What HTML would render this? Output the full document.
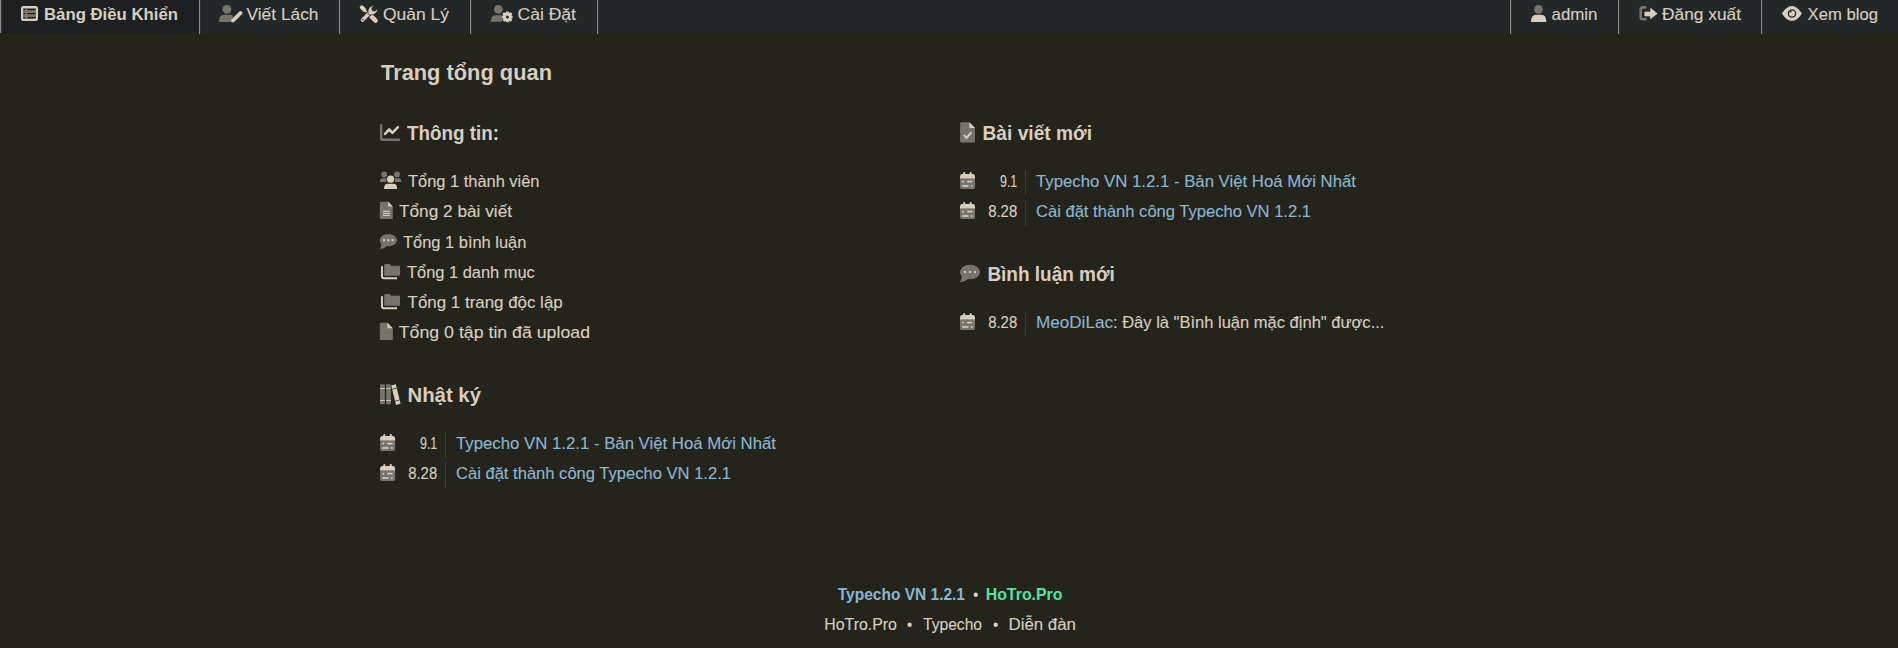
<!DOCTYPE html>
<html><head><meta charset="utf-8"><title>Trang tổng quan</title>
<style>
html,body{margin:0;padding:0;background:#24241d;width:1898px;height:648px;overflow:hidden}
svg{display:block;position:absolute;left:0;top:0}
text{font-family:"Liberation Sans",sans-serif}
</style></head><body>
<svg width="1898" height="648" viewBox="0 0 1898 648">
<rect x="0" y="0" width="1898" height="648" fill="#24241d"/>
<rect x="0" y="0" width="1898" height="33.4" fill="#232728"/>
<rect x="0" y="0" width="199" height="33.4" fill="#1e1f21"/>
<rect x="199" y="0" width="1.1" height="34" fill="#8c8c8a"/>
<rect x="339" y="0" width="1.1" height="34" fill="#8c8c8a"/>
<rect x="470" y="0" width="1.1" height="34" fill="#8c8c8a"/>
<rect x="597" y="0" width="1.1" height="34" fill="#8c8c8a"/>
<rect x="1510" y="0" width="1.1" height="34" fill="#8c8c8a"/>
<rect x="1618" y="0" width="1.1" height="34" fill="#8c8c8a"/>
<rect x="1761" y="0" width="1.1" height="34" fill="#8c8c8a"/>
<rect x="0" y="0" width="1.2" height="33" fill="#8c8c8a"/>
<rect x="445" y="432" width="1" height="25.600000000000023" fill="#3f3d35"/>
<rect x="445" y="462" width="1" height="25.69999999999999" fill="#3f3d35"/>
<rect x="1025" y="169.5" width="1" height="25.5" fill="#3f3d35"/>
<rect x="1025" y="200" width="1" height="25.69999999999999" fill="#3f3d35"/>
<rect x="1025" y="311.4" width="1" height="24.30000000000001" fill="#3f3d35"/>
<rect x="22" y="6.9" width="15" height="13.2" rx="1.5" fill="#77746d" stroke="#d8cec0" stroke-width="2"/>
<rect x="23.6" y="9" width="1.6" height="1.2" fill="#1e1f21"/><rect x="27.5" y="9" width="8" height="1.2" fill="#1e1f21"/>
<rect x="23.6" y="13" width="1.6" height="1.2" fill="#1e1f21"/><rect x="27.5" y="13" width="8" height="1.2" fill="#1e1f21"/>
<rect x="23.6" y="17" width="1.6" height="1.2" fill="#1e1f21"/><rect x="27.5" y="17" width="8" height="1.2" fill="#1e1f21"/>
<circle cx="226.9" cy="9.4" r="4.4" fill="#77746d"/>
<path d="M219,22 Q219,14.7 224,14.7 L229.5,14.7 Q232,14.7 233,16 L230.5,22 Z" fill="#77746d"/>
<path d="M233,20.5 L238.2,15.3" stroke="#d8cec0" stroke-width="3.8" stroke-linecap="round"/>
<path d="M231.3,22.2 L231.9,19.8 L233.7,21.6 Z" fill="#d8cec0"/>
<path d="M238.9,14.6 L239.9,13.6" stroke="#232728" stroke-width="5"/><path d="M239.7,13.8 L240.6,12.9" stroke="#d8cec0" stroke-width="3.8" stroke-linecap="round"/>
<path d="M362.7,8.3 L367.8,13.4" stroke="#d8cec0" stroke-width="1.6"/>
<path d="M361.8,7.3 L364.3,9.8" stroke="#d8cec0" stroke-width="4" stroke-linecap="round"/>
<path d="M370.6,15.6 L375.6,20.6" stroke="#d8cec0" stroke-width="4.4" stroke-linecap="round"/>
<path d="M362.6,20 L369,13.6" stroke="#232728" stroke-width="5.4" stroke-linecap="round"/>
<path d="M362.6,20 L369,13.6" stroke="#d8cec0" stroke-width="3.6" stroke-linecap="round"/>
<path d="M368.3,14.4 Q367,9.5 370.5,6.8 Q372.2,5.5 374.3,5.4 L371.8,8 L372.3,10.6 L374.9,11.2 L377.7,8.6 Q377.9,11.6 375.4,13.6 Q372.8,15.4 369.6,14.9 Z" fill="#d8cec0" stroke="#232728" stroke-width="0.7"/>
<circle cx="362.9" cy="19.7" r="0.75" fill="#232728"/>
<circle cx="498.4" cy="9.3" r="4.4" fill="#77746d"/>
<path d="M490.7,21.8 Q490.7,15.2 495.5,15.2 L501,15.2 Q503,15.2 503.5,16 L501.5,21.8 Z" fill="#77746d"/>
<g transform="translate(507.4,16.7)"><path d="M-1.3,-5.2 L1.3,-5.2 L1.7,-3.6 L3.4,-4.5 L5,-2.8 L4.1,-1.2 L5.2,-0.4 L5.2,1.6 L4,2 L4.8,3.6 L3.1,5.1 L1.6,4.1 L1.3,5.6 L-1.3,5.6 L-1.6,4.1 L-3.1,5.1 L-4.8,3.6 L-4,2 L-5.2,1.6 L-5.2,-0.4 L-4.1,-1.2 L-5,-2.8 L-3.4,-4.5 L-1.7,-3.6 Z" fill="#d8cec0"/>
<circle cx="0" cy="0.3" r="1.5" fill="#232728"/></g>
<circle cx="1538.5" cy="9.3" r="4.4" fill="#77746d"/>
<path d="M1531,22 Q1531,14.7 1536,14.7 L1541.3,14.7 Q1546.3,14.7 1546.3,22 Z" fill="#d8cec0"/>
<path d="M1645.5,7.4 L1643,7.4 Q1640.7,7.4 1640.7,9.7 L1640.7,17 Q1640.7,19.3 1643,19.3 L1645.5,19.3" fill="none" stroke="#77746d" stroke-width="2.6" stroke-linecap="round"/>
<path d="M1644.8,12 L1650.6,12 L1650.6,8.2 L1657.2,13.5 L1650.6,18.8 L1650.6,16 L1644.8,16 Z" fill="#d8cec0" stroke="#d8cec0" stroke-width="0.6" stroke-linejoin="round"/>
<path d="M1781.9,13.4 Q1786.5,5.9 1791.9,5.9 Q1797.3,5.9 1801.9,13.4 Q1797.3,20.8 1791.9,20.8 Q1786.5,20.8 1781.9,13.4 Z" fill="#d8cec0"/>
<circle cx="1792" cy="13.5" r="3.6" fill="#d8cec0" stroke="#232728" stroke-width="1.3"/>
<path d="M1789.2,12.6 A2.9,2.9 0 0 1 1791.2,10.6 L1791.6,12.4 Z" fill="#232728"/>
<path d="M381.2,124.2 L381.2,138.5 Q381.2,139.7 382.4,139.7 L399.9,139.7" fill="none" stroke="#77746d" stroke-width="2.4" stroke-linecap="butt"/>
<path d="M385,133.8 L389.2,129.4 L392.4,132.8 L397.9,127.2" fill="none" stroke="#d8cec0" stroke-width="2.5" stroke-linecap="round" stroke-linejoin="round"/>
<circle cx="384.2" cy="174.4" r="2.9" fill="#77746d"/><circle cx="397" cy="174.4" r="2.9" fill="#77746d"/>
<path d="M379.8,182 Q379.8,178.2 382.5,178.2 L386.4,178.2 L386.4,182 Z" fill="#77746d"/>
<path d="M395,182 L395,178.2 L398.8,178.2 Q401.3,178.2 401.3,182 Z" fill="#77746d"/>
<circle cx="390.6" cy="179.2" r="3.6" fill="#d8cec0"/>
<path d="M384,189 Q384,183.8 387.5,183.8 L393.6,183.8 Q397.1,183.8 397.1,189 Z" fill="#d8cec0"/>
<path d="M379.8,202.8 Q379.8,201.8 380.8,201.8 L388.2,201.8 L392.8,206.4 L392.8,217.9 Q392.8,218.9 391.8,218.9 L380.8,218.9 Q379.8,218.9 379.8,217.9 Z" fill="#77746d"/>
<path d="M388.2,201.8 L392.8,206.4 L388.2,206.4 Z" fill="#d8cec0"/>
<rect x="383" y="210.7" width="6.8" height="1.1" fill="#d8cec0"/><rect x="383" y="212.8" width="6.8" height="1.1" fill="#d8cec0"/><rect x="383" y="214.9" width="6.8" height="1.1" fill="#d8cec0"/>
<ellipse cx="388.35" cy="240.174" rx="8.55" ry="6.1739999999999995" fill="#77746d"/>
<path d="M381.51,242.82 Q381.85200000000003,246.495 379.8,248.7 Q384.93,248.7 386.982,245.76 Z" fill="#77746d"/>
<rect x="383.07500000000005" y="239.174" width="2" height="2" fill="#d8cec0"/><rect x="387.35" y="239.174" width="2" height="2" fill="#d8cec0"/><rect x="391.625" y="239.174" width="2" height="2" fill="#d8cec0"/>
<path d="M382.0,266.2 L382.0,276.6 Q382.0,278.3 383.7,278.3 L397.0,278.3" fill="none" stroke="#d8cec0" stroke-width="2"/>
<path d="M384.2,265 Q384.2,264 385.2,264 L389.7,264 L391.2,265.8 L399.0,265.8 Q400.0,265.8 400.0,266.8 L400.0,274.8 Q400.0,275.8 399.0,275.8 L385.2,275.8 Q384.2,275.8 384.2,274.8 Z" fill="#77746d"/>
<path d="M382.0,296.2 L382.0,306.6 Q382.0,308.3 383.7,308.3 L397.0,308.3" fill="none" stroke="#d8cec0" stroke-width="2"/>
<path d="M384.2,295 Q384.2,294 385.2,294 L389.7,294 L391.2,295.8 L399.0,295.8 Q400.0,295.8 400.0,296.8 L400.0,304.8 Q400.0,305.8 399.0,305.8 L385.2,305.8 Q384.2,305.8 384.2,304.8 Z" fill="#77746d"/>
<path d="M379.8,323.8 Q379.8,322.8 380.8,322.8 L387.40000000000003,322.8 L392.8,328.2 L392.8,338.90000000000003 Q392.8,339.90000000000003 391.8,339.90000000000003 L380.8,339.90000000000003 Q379.8,339.90000000000003 379.8,338.90000000000003 Z" fill="#77746d"/>
<path d="M387.40000000000003,322.8 L392.8,328.2 L387.40000000000003,328.2 Z" fill="#d8cec0"/>
<rect x="380.1" y="384.3" width="4.8" height="19.9" rx="0.6" fill="#77746d"/><rect x="386.2" y="384.3" width="4.7" height="19.9" rx="0.6" fill="#77746d"/>
<rect x="380.1" y="388" width="4.8" height="0.9" fill="#d8cec0"/><rect x="380.1" y="400" width="4.8" height="0.9" fill="#d8cec0"/>
<rect x="386.2" y="388" width="4.7" height="0.9" fill="#d8cec0"/><rect x="386.2" y="400" width="4.7" height="0.9" fill="#d8cec0"/>
<path d="M391.2,385.6 L395.8,384.3 L400.6,403.8 L396,405.1 Z" fill="#d8cec0"/>
<path d="M392.2,389.3 L396.8,388" stroke="#24241d" stroke-width="0.8"/><path d="M395.1,401.2 L399.7,399.9" stroke="#24241d" stroke-width="0.8"/>
<g transform="translate(380.1,434)">
<rect x="3.2" y="0" width="2" height="3" rx="1" fill="#d8cec0"/><rect x="9.7" y="0" width="2" height="3" rx="1" fill="#d8cec0"/>
<path d="M0,4.5 Q0,2 2,2 L13,2 Q15,2 15,4.5 L15,6.7 L0,6.7 Z" fill="#d8cec0"/>
<path d="M0,6.7 L15,6.7 L15,15.2 Q15,17 13.2,17 L1.8,17 Q0,17 0,15.2 Z" fill="#77746d"/>
<rect x="2.2" y="8.8" width="1.8" height="1.6" fill="#d8cec0"/><rect x="7.2" y="8.8" width="5.3" height="1.6" fill="#d8cec0"/>
<rect x="2.2" y="13.2" width="6.2" height="1.6" fill="#d8cec0"/><rect x="10.8" y="13.2" width="1.8" height="1.6" fill="#d8cec0"/>
</g>
<g transform="translate(380.1,464)">
<rect x="3.2" y="0" width="2" height="3" rx="1" fill="#d8cec0"/><rect x="9.7" y="0" width="2" height="3" rx="1" fill="#d8cec0"/>
<path d="M0,4.5 Q0,2 2,2 L13,2 Q15,2 15,4.5 L15,6.7 L0,6.7 Z" fill="#d8cec0"/>
<path d="M0,6.7 L15,6.7 L15,15.2 Q15,17 13.2,17 L1.8,17 Q0,17 0,15.2 Z" fill="#77746d"/>
<rect x="2.2" y="8.8" width="1.8" height="1.6" fill="#d8cec0"/><rect x="7.2" y="8.8" width="5.3" height="1.6" fill="#d8cec0"/>
<rect x="2.2" y="13.2" width="6.2" height="1.6" fill="#d8cec0"/><rect x="10.8" y="13.2" width="1.8" height="1.6" fill="#d8cec0"/>
</g>
<g transform="translate(960,172)">
<rect x="3.2" y="0" width="2" height="3" rx="1" fill="#d8cec0"/><rect x="9.7" y="0" width="2" height="3" rx="1" fill="#d8cec0"/>
<path d="M0,4.5 Q0,2 2,2 L13,2 Q15,2 15,4.5 L15,6.7 L0,6.7 Z" fill="#d8cec0"/>
<path d="M0,6.7 L15,6.7 L15,15.2 Q15,17 13.2,17 L1.8,17 Q0,17 0,15.2 Z" fill="#77746d"/>
<rect x="2.2" y="8.8" width="1.8" height="1.6" fill="#d8cec0"/><rect x="7.2" y="8.8" width="5.3" height="1.6" fill="#d8cec0"/>
<rect x="2.2" y="13.2" width="6.2" height="1.6" fill="#d8cec0"/><rect x="10.8" y="13.2" width="1.8" height="1.6" fill="#d8cec0"/>
</g>
<g transform="translate(960,202)">
<rect x="3.2" y="0" width="2" height="3" rx="1" fill="#d8cec0"/><rect x="9.7" y="0" width="2" height="3" rx="1" fill="#d8cec0"/>
<path d="M0,4.5 Q0,2 2,2 L13,2 Q15,2 15,4.5 L15,6.7 L0,6.7 Z" fill="#d8cec0"/>
<path d="M0,6.7 L15,6.7 L15,15.2 Q15,17 13.2,17 L1.8,17 Q0,17 0,15.2 Z" fill="#77746d"/>
<rect x="2.2" y="8.8" width="1.8" height="1.6" fill="#d8cec0"/><rect x="7.2" y="8.8" width="5.3" height="1.6" fill="#d8cec0"/>
<rect x="2.2" y="13.2" width="6.2" height="1.6" fill="#d8cec0"/><rect x="10.8" y="13.2" width="1.8" height="1.6" fill="#d8cec0"/>
</g>
<g transform="translate(960,313)">
<rect x="3.2" y="0" width="2" height="3" rx="1" fill="#d8cec0"/><rect x="9.7" y="0" width="2" height="3" rx="1" fill="#d8cec0"/>
<path d="M0,4.5 Q0,2 2,2 L13,2 Q15,2 15,4.5 L15,6.7 L0,6.7 Z" fill="#d8cec0"/>
<path d="M0,6.7 L15,6.7 L15,15.2 Q15,17 13.2,17 L1.8,17 Q0,17 0,15.2 Z" fill="#77746d"/>
<rect x="2.2" y="8.8" width="1.8" height="1.6" fill="#d8cec0"/><rect x="7.2" y="8.8" width="5.3" height="1.6" fill="#d8cec0"/>
<rect x="2.2" y="13.2" width="6.2" height="1.6" fill="#d8cec0"/><rect x="10.8" y="13.2" width="1.8" height="1.6" fill="#d8cec0"/>
</g>
<path d="M960.1,123.3 Q960.1,122.3 961.1,122.3 L969.4,122.3 L975.0,127.89999999999999 L975.0,141.6 Q975.0,142.6 974.0,142.6 L961.1,142.6 Q960.1,142.6 960.1,141.6 Z" fill="#77746d"/>
<path d="M969.4,122.3 L975.0,127.89999999999999 L969.4,127.89999999999999 Z" fill="#d8cec0"/>
<path d="M964.4,135.6 L966.5,137.9 L970.8,133" fill="none" stroke="#d8cec0" stroke-width="2" stroke-linecap="round" stroke-linejoin="round"/>
<ellipse cx="969.9" cy="272.024" rx="10.1" ry="7.223999999999999" fill="#77746d"/>
<path d="M961.8199999999999,275.12 Q962.2239999999999,279.42 959.8,282.0 Q965.8599999999999,282.0 968.284,278.56 Z" fill="#77746d"/>
<rect x="963.85" y="271.024" width="2" height="2" fill="#d8cec0"/><rect x="968.9" y="271.024" width="2" height="2" fill="#d8cec0"/><rect x="973.9499999999999" y="271.024" width="2" height="2" fill="#d8cec0"/>
<circle cx="975.8" cy="594.8" r="2.2" fill="#d8cec0"/><circle cx="909.6" cy="624.8" r="2.2" fill="#d8cec0"/><circle cx="995.7" cy="624.8" r="2.2" fill="#d8cec0"/>
<text x="44" y="20" font-size="17" fill="#d8cec0" font-weight="bold" textLength="134" lengthAdjust="spacingAndGlyphs">Bảng Điều Khiển</text>
<text x="246.5" y="20" font-size="16.5" fill="#d8cec0" stroke="#d8cec0" stroke-width="0.12" textLength="72" lengthAdjust="spacingAndGlyphs">Viết Lách</text>
<text x="383" y="20" font-size="16.5" fill="#d8cec0" stroke="#d8cec0" stroke-width="0.12" textLength="66" lengthAdjust="spacingAndGlyphs">Quản Lý</text>
<text x="517.5" y="20" font-size="16.5" fill="#d8cec0" stroke="#d8cec0" stroke-width="0.12" textLength="58.5" lengthAdjust="spacingAndGlyphs">Cài Đặt</text>
<text x="1551.5" y="20" font-size="16.5" fill="#d8cec0" stroke="#d8cec0" stroke-width="0.12" textLength="46" lengthAdjust="spacingAndGlyphs">admin</text>
<text x="1662" y="20" font-size="16.5" fill="#d8cec0" stroke="#d8cec0" stroke-width="0.12" textLength="79" lengthAdjust="spacingAndGlyphs">Đăng xuất</text>
<text x="1807.5" y="20" font-size="16.5" fill="#d8cec0" stroke="#d8cec0" stroke-width="0.12" textLength="70.5" lengthAdjust="spacingAndGlyphs">Xem blog</text>
<text x="381" y="80" font-size="21.6" fill="#d8cec0" font-weight="bold" textLength="171" lengthAdjust="spacingAndGlyphs">Trang tổng quan</text>
<text x="407" y="139.8" font-size="19.5" fill="#d8cec0" font-weight="bold" textLength="92" lengthAdjust="spacingAndGlyphs">Thông tin:</text>
<text x="407.5" y="401.8" font-size="19.5" fill="#d8cec0" font-weight="bold" textLength="73.5" lengthAdjust="spacingAndGlyphs">Nhật ký</text>
<text x="982.5" y="139.8" font-size="19.5" fill="#d8cec0" font-weight="bold" textLength="109.5" lengthAdjust="spacingAndGlyphs">Bài viết mới</text>
<text x="987.4" y="281" font-size="19.5" fill="#d8cec0" font-weight="bold" textLength="127.3" lengthAdjust="spacingAndGlyphs">Bình luận mới</text>
<text x="408" y="186.5" font-size="16.4" fill="#d8cec0" stroke="#d8cec0" stroke-width="0.12" textLength="131.5" lengthAdjust="spacingAndGlyphs">Tổng 1 thành viên</text>
<text x="399" y="216.5" font-size="16.4" fill="#d8cec0" stroke="#d8cec0" stroke-width="0.12" textLength="113" lengthAdjust="spacingAndGlyphs">Tổng 2 bài viết</text>
<text x="403" y="247.8" font-size="16.4" fill="#d8cec0" stroke="#d8cec0" stroke-width="0.12" textLength="123.4" lengthAdjust="spacingAndGlyphs">Tổng 1 bình luận</text>
<text x="407" y="278" font-size="16.4" fill="#d8cec0" stroke="#d8cec0" stroke-width="0.12" textLength="127.8" lengthAdjust="spacingAndGlyphs">Tổng 1 danh mục</text>
<text x="407.6" y="307.8" font-size="16.4" fill="#d8cec0" stroke="#d8cec0" stroke-width="0.12" textLength="155.1" lengthAdjust="spacingAndGlyphs">Tổng 1 trang độc lập</text>
<text x="398.8" y="338" font-size="16.4" fill="#d8cec0" stroke="#d8cec0" stroke-width="0.12" textLength="191.2" lengthAdjust="spacingAndGlyphs">Tổng 0 tập tin đã upload</text>
<text x="420" y="448.9" font-size="16.4" fill="#d8cec0" stroke="#d8cec0" stroke-width="0.12" textLength="17.2" lengthAdjust="spacingAndGlyphs">9.1</text>
<text x="408.2" y="478.7" font-size="16.4" fill="#d8cec0" stroke="#d8cec0" stroke-width="0.12" textLength="29" lengthAdjust="spacingAndGlyphs">8.28</text>
<text x="456" y="448.9" font-size="16.4" fill="#8cb6cf" stroke="#8cb6cf" stroke-width="0.12" textLength="320" lengthAdjust="spacingAndGlyphs">Typecho VN 1.2.1 - Bản Việt Hoá Mới Nhất</text>
<text x="456" y="478.7" font-size="16.4" fill="#8cb6cf" stroke="#8cb6cf" stroke-width="0.12" textLength="275" lengthAdjust="spacingAndGlyphs">Cài đặt thành công Typecho VN 1.2.1</text>
<text x="1000" y="186.6" font-size="16.4" fill="#d8cec0" stroke="#d8cec0" stroke-width="0.12" textLength="17.2" lengthAdjust="spacingAndGlyphs">9.1</text>
<text x="988.2" y="216.6" font-size="16.4" fill="#d8cec0" stroke="#d8cec0" stroke-width="0.12" textLength="29" lengthAdjust="spacingAndGlyphs">8.28</text>
<text x="1036" y="186.6" font-size="16.4" fill="#8cb6cf" stroke="#8cb6cf" stroke-width="0.12" textLength="320" lengthAdjust="spacingAndGlyphs">Typecho VN 1.2.1 - Bản Việt Hoá Mới Nhất</text>
<text x="1036" y="216.6" font-size="16.4" fill="#8cb6cf" stroke="#8cb6cf" stroke-width="0.12" textLength="275" lengthAdjust="spacingAndGlyphs">Cài đặt thành công Typecho VN 1.2.1</text>
<text x="988.2" y="327.8" font-size="16.4" fill="#d8cec0" stroke="#d8cec0" stroke-width="0.12" textLength="29" lengthAdjust="spacingAndGlyphs">8.28</text>
<text x="1036" y="327.8" font-size="16.4" fill="#8cb6cf" stroke="#8cb6cf" stroke-width="0.12" textLength="77" lengthAdjust="spacingAndGlyphs">MeoDiLac</text>
<text x="1113" y="327.8" font-size="16.4" fill="#d8cec0" stroke="#d8cec0" stroke-width="0.12" textLength="271.4" lengthAdjust="spacingAndGlyphs">: Đây là &quot;Bình luận mặc định&quot; được...</text>
<text x="837.8" y="600" font-size="16.3" fill="#8cb6cf" font-weight="bold" textLength="127.2" lengthAdjust="spacingAndGlyphs">Typecho VN 1.2.1</text>
<text x="985.7" y="600" font-size="16.3" fill="#4ee6a2" font-weight="bold" textLength="76.8" lengthAdjust="spacingAndGlyphs">HoTro.Pro</text>
<text x="824.3" y="629.8" font-size="16.3" fill="#d8cec0" stroke="#d8cec0" stroke-width="0.12" textLength="72.5" lengthAdjust="spacingAndGlyphs">HoTro.Pro</text>
<text x="923" y="629.8" font-size="16.3" fill="#d8cec0" stroke="#d8cec0" stroke-width="0.12" textLength="59" lengthAdjust="spacingAndGlyphs">Typecho</text>
<text x="1008.5" y="629.8" font-size="16.3" fill="#d8cec0" stroke="#d8cec0" stroke-width="0.12" textLength="67.5" lengthAdjust="spacingAndGlyphs">Diễn đàn</text>
</svg>
</body></html>
